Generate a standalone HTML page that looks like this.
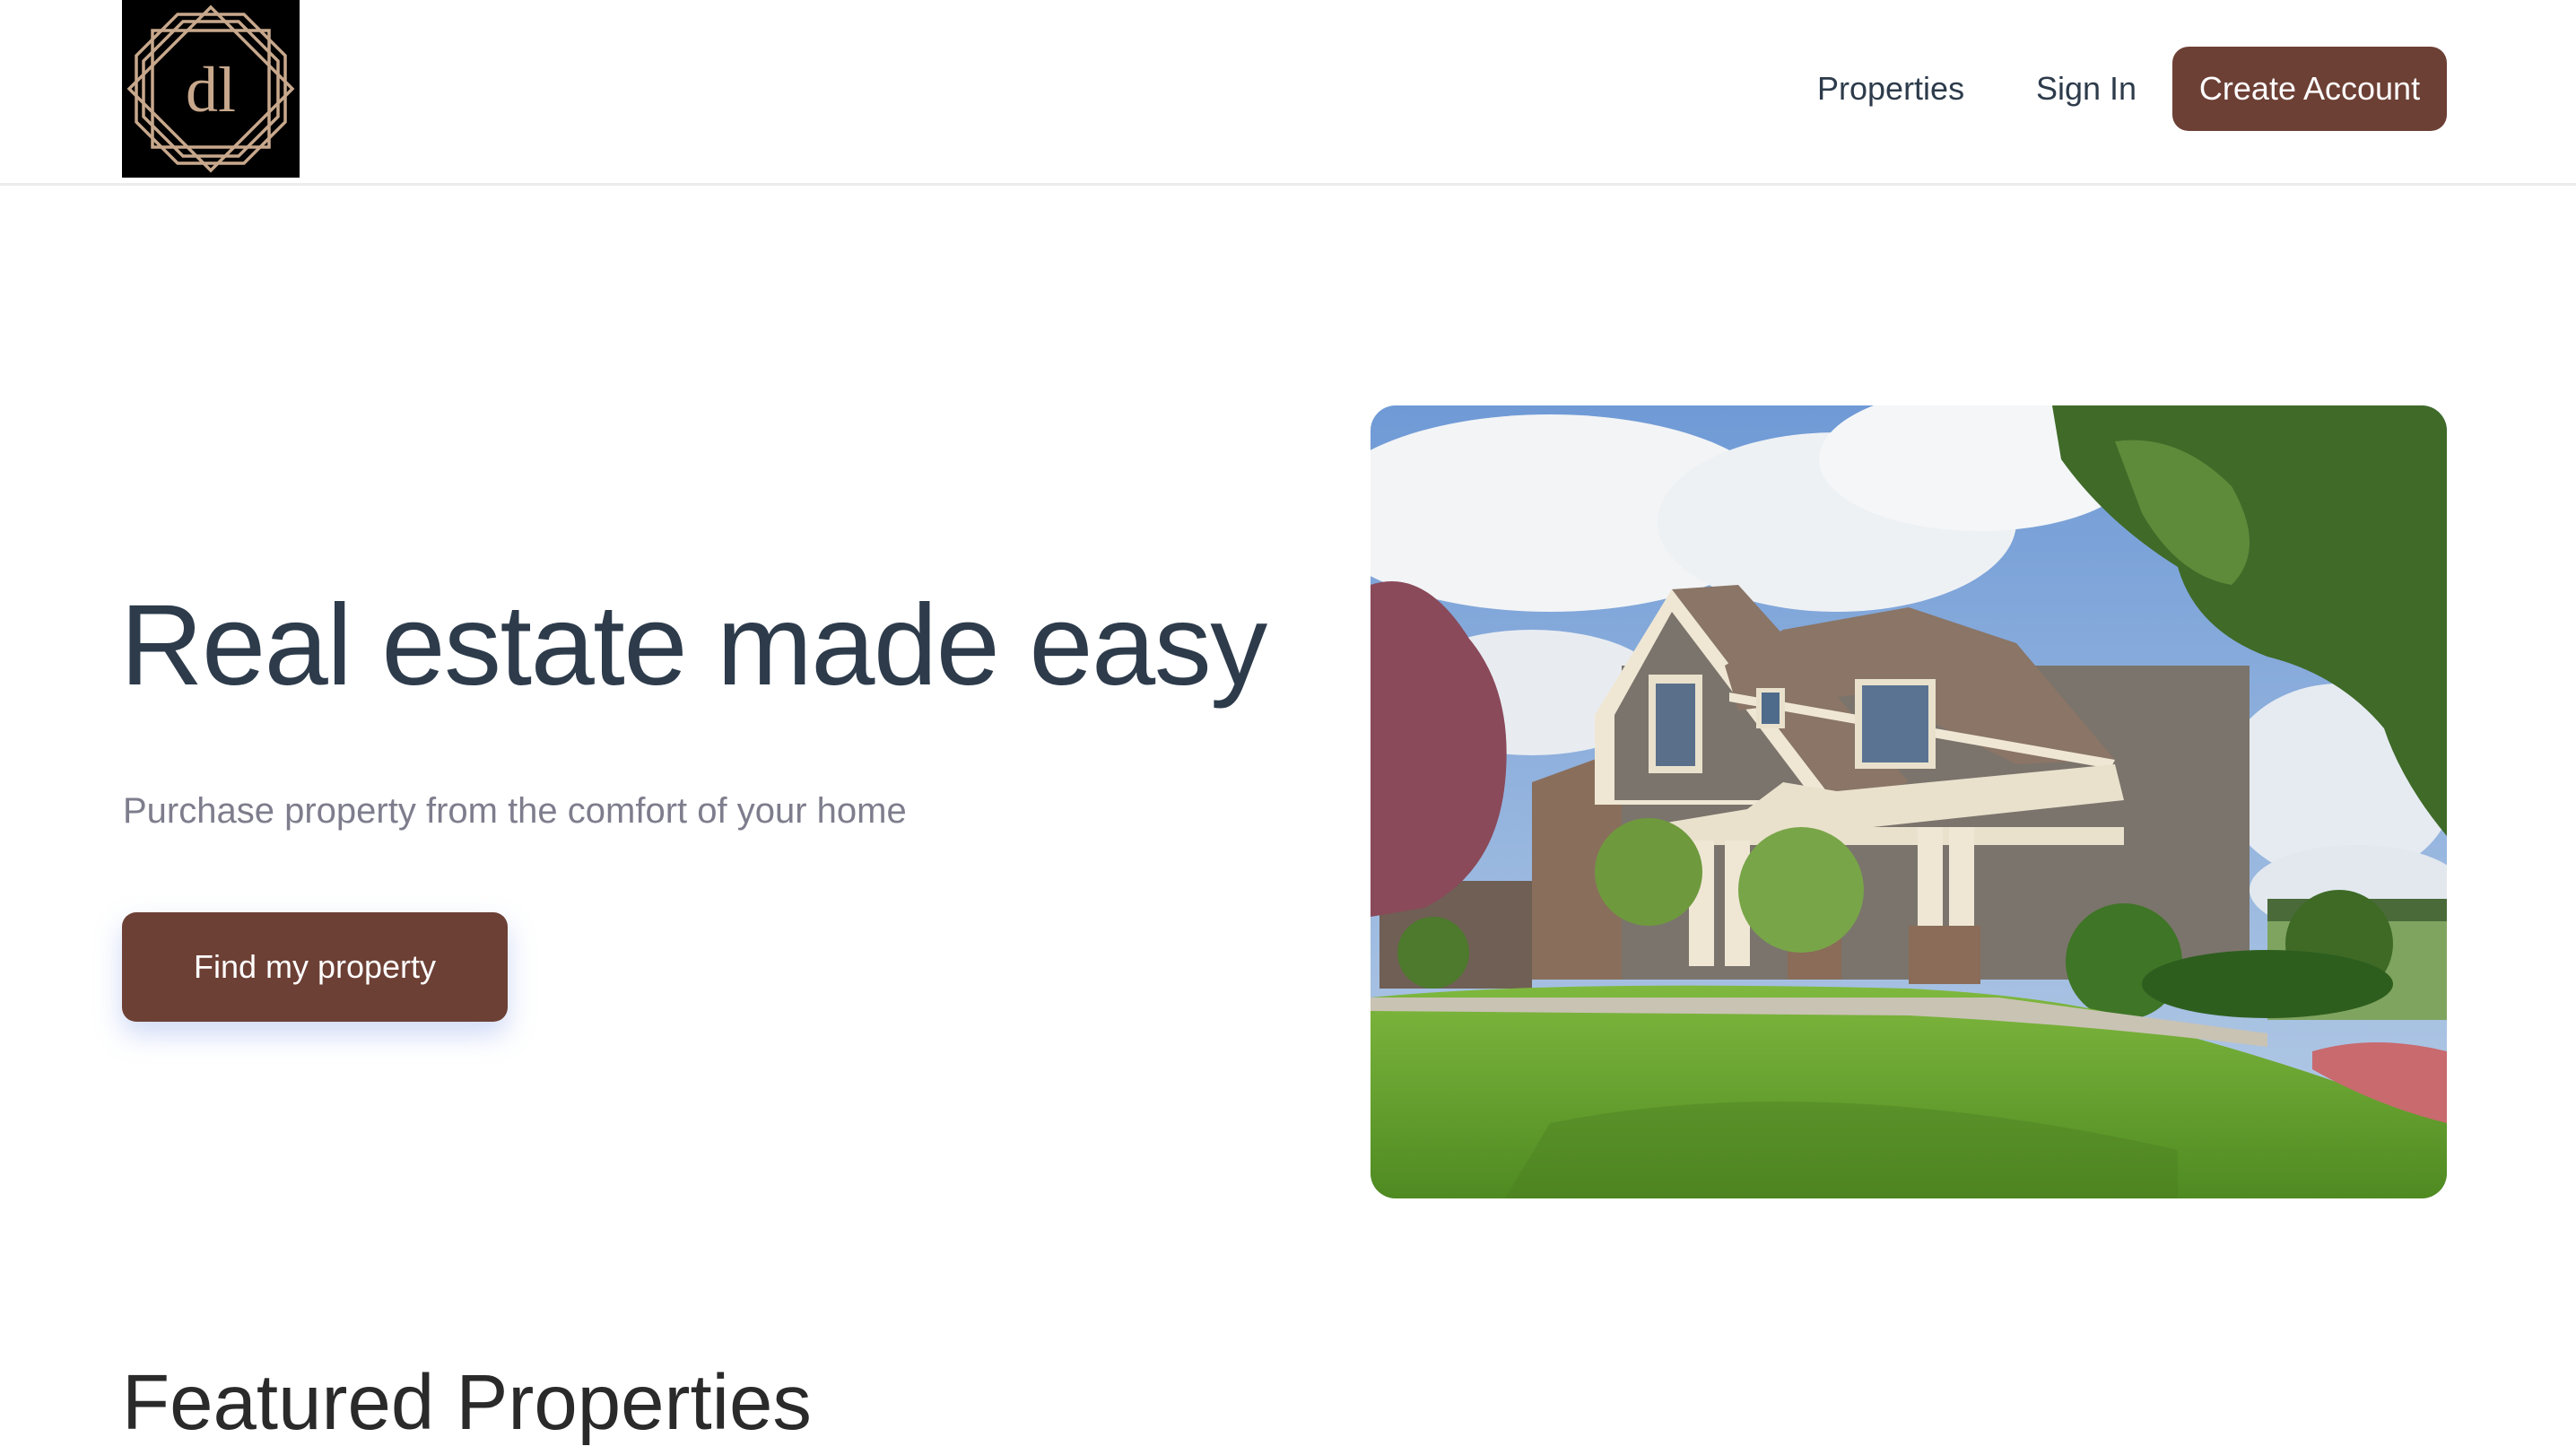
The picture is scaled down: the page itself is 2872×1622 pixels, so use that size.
<!DOCTYPE html>
<html><head><meta charset="utf-8"><style>
*{margin:0;padding:0;box-sizing:border-box}
html,body{width:2872px;height:1622px;overflow:hidden;background:#fff;font-family:"Liberation Sans",Arial,sans-serif}
.hdr{position:absolute;left:0;top:0;width:2872px;height:207px;border-bottom:3px solid #ececec}
.logo{position:absolute;left:136px;top:0;width:198px;height:198px;background:#000}
.nav{position:absolute;top:99px;font-size:36px;color:#2d3b4b;transform:translateY(-50%)}
.btn{position:absolute;background:#6d4035;color:#fff;font-size:36px;display:flex;align-items:center;justify-content:center}
h1{position:absolute;left:134px;top:640px;font-size:128px;font-weight:normal;color:#2d3b4b;letter-spacing:-1.5px;white-space:nowrap;line-height:160px}
.sub{position:absolute;left:137px;top:882px;font-size:40px;color:#7e7d8d;white-space:nowrap}
h2{position:absolute;left:136px;top:1514px;font-size:87px;font-weight:normal;color:#2a2a2a;white-space:nowrap}
.img{position:absolute;left:1528px;top:452px;width:1200px;height:884px;border-radius:28px;overflow:hidden}
</style></head><body>
<div class="hdr"></div>
<div class="logo"><svg width="198" height="198" viewBox="0 0 198 198" fill="none" stroke="#c8a88c" stroke-width="3.5">
<polygon points="99,8 190,99 99,190 8,99"/>
<polygon points="34,34 164,34 164,164 34,164"/>
<polygon points="62,16 136,16 182,62 182,136 136,182 62,182 16,136 16,62"/>
<polygon points="68,24 130,24 174,68 174,130 130,174 68,174 24,130 24,68"/>
<text x="99" y="124" font-family="Liberation Serif,serif" font-size="72" fill="#c8a88c" stroke="none" text-anchor="middle">dl</text>
</svg></div>
<div class="nav" style="left:2026px">Properties</div>
<div class="nav" style="left:2270px">Sign In</div>
<div class="btn" style="left:2422px;top:52px;width:306px;height:94px;border-radius:18px">Create Account</div>
<h1>Real estate made easy</h1>
<div class="sub">Purchase property from the comfort of your home</div>
<div class="btn" style="left:136px;top:1017px;width:430px;height:122px;border-radius:16px;box-shadow:0 14px 30px rgba(120,150,230,0.35)">Find my property</div>
<div class="img"><svg width="1200" height="884" viewBox="0 0 1200 884">
<defs><linearGradient id="sky" x1="0" y1="0" x2="0" y2="1"><stop offset="0" stop-color="#6f9ad6"/><stop offset="1" stop-color="#b8cde6"/></linearGradient>
<linearGradient id="g" x1="0" y1="0" x2="0" y2="1"><stop offset="0" stop-color="#7fb83e"/><stop offset="1" stop-color="#4f8a22"/></linearGradient></defs>
<rect width="1200" height="884" fill="url(#sky)"/>
<ellipse cx="200" cy="120" rx="260" ry="110" fill="#f2f4f6"/>
<ellipse cx="520" cy="130" rx="200" ry="100" fill="#eef1f4"/>
<ellipse cx="680" cy="60" rx="180" ry="80" fill="#f4f6f8"/>
<ellipse cx="180" cy="320" rx="150" ry="70" fill="#e8ecf1"/>
<ellipse cx="1080" cy="420" rx="130" ry="110" fill="#e6ebf1"/>
<ellipse cx="1100" cy="540" rx="120" ry="50" fill="#e2e8ee"/>
<rect x="1000" y="550" width="200" height="30" fill="#4a6a3a"/>
<rect x="1000" y="575" width="200" height="110" fill="#7fa460"/>
<polygon points="180,420 290,380 300,640 180,640" fill="#8a6e5c"/>
<rect x="280" y="290" width="700" height="350" fill="#7b746c"/>
<polygon points="250,345 336,205 520,445 250,445" fill="#efe7d4"/>
<polygon points="272,345 336,230 495,440 272,440" fill="#7b746c"/>
<polygon points="336,205 410,200 500,300 600,420 520,445" fill="#8a7566"/>
<polygon points="395,290 460,250 600,225 720,265 830,395 720,400 560,320 410,340" fill="#8a7566"/>
<polygon points="400,320 830,395 825,405 400,330" fill="#efe7d4"/>
<polygon points="300,470 420,450 460,420 520,430 830,400 840,440 560,470 300,490" fill="#e9e1cc"/>
<rect x="280" y="470" width="560" height="20" fill="#e9e1cc"/>
<rect x="310" y="300" width="60" height="110" fill="#e9e1cc"/><rect x="318" y="310" width="44" height="92" fill="#5a6f8a"/>
<rect x="540" y="305" width="90" height="100" fill="#e9e1cc"/><rect x="548" y="312" width="74" height="86" fill="#5a7393"/>
<rect x="430" y="315" width="32" height="45" fill="#e9e1cc"/><rect x="436" y="320" width="20" height="35" fill="#4f6b8c"/>
<rect x="355" y="485" width="28" height="140" fill="#efe7d4"/><rect x="395" y="485" width="28" height="140" fill="#efe7d4"/>
<rect x="610" y="470" width="28" height="170" fill="#efe7d4"/><rect x="645" y="470" width="28" height="170" fill="#efe7d4"/>
<rect x="600" y="580" width="80" height="65" fill="#8a6c58"/><rect x="465" y="590" width="60" height="50" fill="#8a6c58"/>
<rect x="10" y="530" width="170" height="120" fill="#6f5f54"/>
<path d="M0 200 Q60 180 110 260 Q160 320 150 420 Q140 520 60 560 L0 570Z" fill="#8a4a5a"/>
<path d="M760 0 L1200 0 L1200 480 Q1150 420 1130 360 Q1080 300 1000 280 Q920 250 900 180 Q820 130 770 60Z" fill="#3f6a28"/>
<path d="M830 40 Q900 30 960 90 Q1000 160 960 200 Q900 190 860 120Z" fill="#5d8b3a"/>
<circle cx="310" cy="520" r="60" fill="#6e9a3d"/><circle cx="480" cy="540" r="70" fill="#78a548"/>
<circle cx="840" cy="620" r="65" fill="#3f7526"/><circle cx="70" cy="610" r="40" fill="#4d7a2d"/>
<circle cx="1080" cy="600" r="60" fill="#3e6a26"/>
<path d="M0 660 Q200 640 600 650 Q800 660 900 700 Q1050 740 1200 800 L1200 884 L0 884Z" fill="url(#g)"/>
<ellipse cx="1000" cy="645" rx="140" ry="38" fill="#2e5e1e"/>
<path d="M1050 720 Q1120 700 1200 720 L1200 800 Q1120 780 1050 740Z" fill="#c86a6e"/>
<path d="M0 660 L700 660 Q850 680 1000 700 L1000 715 Q800 690 600 680 L0 675Z" fill="#c9c3b4"/>
<path d="M200 800 Q500 740 900 830 L900 884 L150 884Z" fill="#4a7c20" opacity="0.4"/>
</svg></div>
<h2>Featured Properties</h2>
</body></html>
